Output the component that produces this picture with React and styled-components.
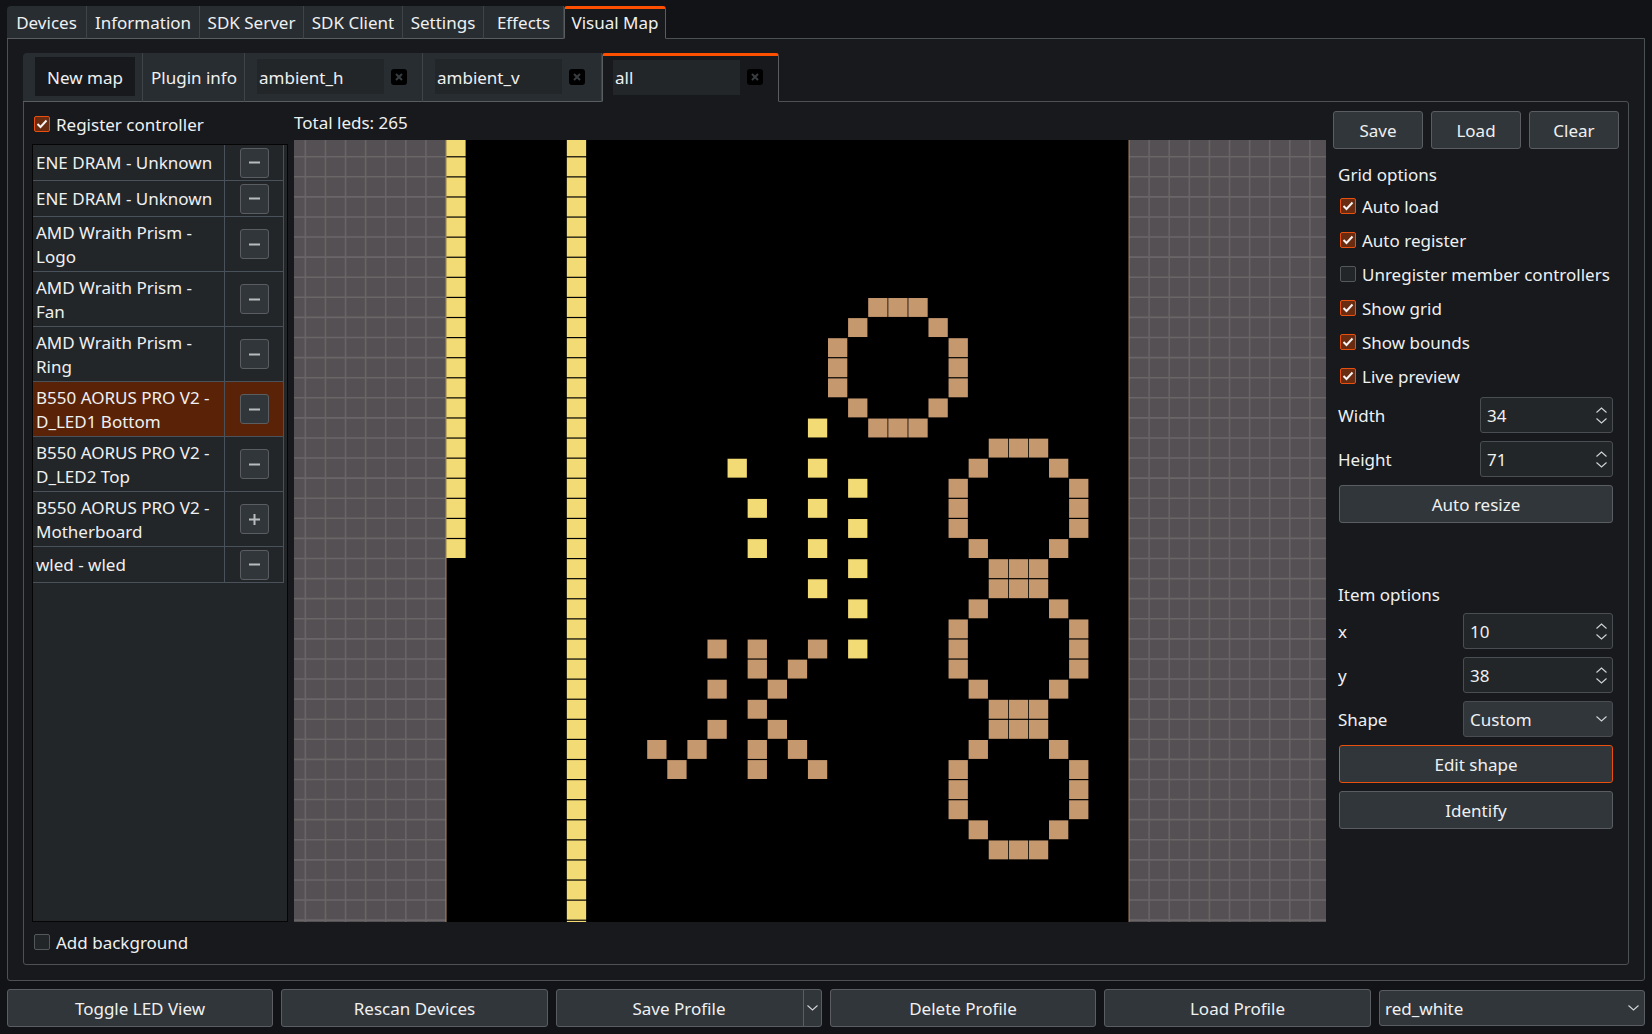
import React from 'react';
import styled, { createGlobalStyle } from 'styled-components';

const Global = createGlobalStyle`
  html, body { margin: 0; padding: 0; background: #111316; }
  * { box-sizing: border-box; }
`;

const Window = styled.div`
  width: 1652px; height: 1034px; padding: 6px 7px 8px;
  display: flex; flex-direction: column;
  background: #111316; color: #eff0f1;
  font-family: "Noto Sans", sans-serif; font-size: 17px; line-height: 24px;
  overflow: hidden;
`;
const Label = styled.span`padding-top: 2px;`;
const TopTabs = styled.div`display: flex; height: 33px; position: relative; z-index: 1;`;
const TopTab = styled.div`
  width: ${p => p.$w}px; height: 33px; flex: none;
  display: flex; align-items: center; justify-content: center;
  background: ${p => p.$active ? '#17191c' : '#282d31'};
  border-right: 1px solid ${p => p.$active ? '#5a5d60' : '#3f4448'};
  border-left: ${p => p.$active ? '1px solid #5a5d60' : 'none'};
  border-top: ${p => p.$active ? '3px solid #ff5000' : 'none'};
  border-bottom: ${p => p.$active ? '1px solid #17191c' : '1px solid #5a5d60'};
  padding: ${p => p.$active ? '0 0 2px' : '2px 0 0'};
  ${p => p.$first ? 'border-top-left-radius: 4px;' : ''}
  ${p => p.$active ? 'border-radius: 3px 3px 0 0;' : ''}
`;
const Pane = styled.div`
  height: 943px; margin-top: -1px; padding: 14px 15px 15px;
  background: #17191c; border: 1px solid #4e5154; border-radius: 0 0 3px 3px;
  display: flex; flex-direction: column;
`;
const MapTabs = styled.div`display: flex; height: 49px; position: relative; z-index: 1;`;
const MapTab = styled.div`
  height: 49px; flex: none; width: ${p => p.$w}px;
  display: flex; align-items: center;
  background: ${p => p.$active ? '#17191c' : '#282d31'};
  border-right: 1px solid ${p => p.$active ? '#5a5d60' : '#3f4448'};
  border-left: ${p => p.$active ? '1px solid #5a5d60' : 'none'};
  border-top: ${p => p.$active ? '3px solid #ff5000' : 'none'};
  border-bottom: ${p => p.$active ? '1px solid #17191c' : '1px solid #5a5d60'};
  ${p => p.$first ? 'border-top-left-radius: 4px; padding-left: 12px;' : ''}
  ${p => p.$active ? 'border-radius: 3px 3px 0 0; padding-left: 10px;' : ''}
  ${p => p.$named ? 'padding-left: 12px;' : ''}
  ${p => p.$center ? 'justify-content: center; padding-left: 1px;' : ''}
`;
const NewMap = styled.div`
  width: 100px; height: 39px; background: #17191c; margin-top: -1px;
  display: flex; align-items: center; justify-content: center;
`;
const TabName = styled.div`
  width: 127px; height: 35px; background: #232629; padding: 0 2px;
  display: flex; align-items: center; margin-top: ${p => p.$active ? '-3px' : '-1px'};
`;
const CloseBox = styled.div`
  width: 16px; height: 16px; margin-left: 7px; border-radius: 3px; background: #000;
  display: flex; align-items: center; justify-content: center;
  margin-top: ${p => p.$active ? '-3px' : '-1px'};
`;
const Panel = styled.div`
  height: 864px; margin-top: -1px; padding-left: 8px;
  border: 1px solid #4e5154; border-radius: 0 3px 3px 3px;
  display: grid; grid-template-columns: 262px 1032px 1fr;
`;
const LeftCol = styled.div`display: flex; flex-direction: column; width: 256px;`;
const CheckRow = styled.div`
  display: flex; align-items: center; gap: 6px; height: ${p => p.$h || 34}px;
  padding-left: ${p => p.$pl || 0}px;
  padding-top: ${p => p.$pt || 0}px;
  padding-bottom: ${p => p.$pb || 0}px;
`;
const Box = styled.div`
  width: 16px; height: 16px; flex: none; border-radius: 2px;
  background: ${p => p.$on ? '#692c10' : '#232629'};
  border: 1px solid ${p => p.$on ? '#e9500f' : '#55585b'};
  display: flex; align-items: center; justify-content: center;
`;
const List = styled.div`
  height: 778px; background: #232629; border: 1px solid #050505;
  padding-right: 3px; display: flex; flex-direction: column;
`;
const Row = styled.div`
  display: grid; grid-template-columns: 192px 60px; flex: none;
  height: ${p => p.$tall ? 55 : 36}px;
  background: ${p => p.$sel ? '#5a2207' : 'transparent'};
  border-bottom: 1px solid #49525b;
  border-right: 1px solid #49525b;
`;
const RowName = styled.div`
  padding: ${p => p.$tall ? 2 : 0}px 2px 0 3px; display: flex; align-items: center;
  border-right: 1px solid #49525b; line-height: 24px; white-space: pre-line;
`;
const RowAction = styled.div`display: flex; align-items: center; justify-content: center; padding-right: 1px;`;
const IconButton = styled.div`
  width: 29px; height: 30px; border-radius: 3px; background: #31363b; border: 1px solid #5a5e62;
  display: flex; align-items: center; justify-content: center;
`;
const CenterCol = styled.div`display: flex; flex-direction: column;`;
const Total = styled.div`height: 38px; display: flex; align-items: center; padding-top: 4px;`;
const CanvasWrap = styled.div`width: 1032px; height: 782px; overflow: hidden; background: #555053;`;
const RightCol = styled.div`display: flex; flex-direction: column; padding: 9px 0 0 7px; width: 295px;`;
const ButtonRow = styled.div`display: flex; gap: 8px;`;
const Button = styled.div`
  height: 38px; flex: none; width: ${p => p.$w}px; padding-top: 2px;
  border-radius: 3px; background: #31363b; border: 1px solid ${p => p.$accent ? '#e9500f' : '#5a5e62'};
  display: flex; align-items: center; justify-content: center;
`;
const Section = styled.div`
  margin-left: 6px; width: 274px;
  display: flex; flex-direction: column;
`;
const Heading = styled.div`
  height: 24px; display: flex; align-items: center; margin-left: -1px;
  margin-top: ${p => p.$mt}px; margin-bottom: ${p => p.$mb || 0}px;
`;
const FieldRow = styled.div`
  display: flex; align-items: center; justify-content: space-between;
  height: 36px; margin-top: ${p => p.$mt || 0}px; margin-bottom: 8px; margin-left: -1px; width: 275px;
`;
const Spin = styled.div`
  width: ${p => p.$w}px; height: 36px; border-radius: 3px; background: ${p => p.$select ? '#31363b' : '#232629'};
  border: 1px solid #4a4e52; padding: 0 5px 0 6px;
  display: flex; align-items: center; justify-content: space-between;
`;
const SpinArrows = styled.div`display: flex; flex-direction: column; gap: 5px;`;
const Gap = styled.div`height: 8px; flex: none;`;
const Bottom = styled.div`
  display: flex; gap: 8px; margin-top: 8px; height: 38px; align-items: center;
`;
const BottomButton = styled.div`
  height: 38px; width: ${p => p.$w}px; flex: none; padding-top: 2px;
  border-radius: 3px; background: #31363b; border: 1px solid #5a5e62;
  display: flex; align-items: center; justify-content: center;
`;
const Split = styled.div`
  display: flex; width: 266px; height: 38px; flex: none; border-radius: 3px; background: #31363b; border: 1px solid #5a5e62;
`;
const SplitMain = styled.div`flex: 1; display: flex; align-items: center; justify-content: center; padding: 2px 2px 0 0; border-right: 1px solid #5a5e62;`;
const SplitArrow = styled.div`width: 17px; display: flex; align-items: center; justify-content: center;`;
const ProfileSelect = styled.div`
  height: 36px; width: 266px; border-radius: 3px; background: #31363b; border: 1px solid #5a5e62;
  display: flex; align-items: center; justify-content: space-between; padding: 0 5px;
`;

const Check = () => (
  <svg width="12" height="10" viewBox="0 0 12 10"><path d="M1.5 5 L4.5 8 L10.5 1.5" fill="none" stroke="#f4f4f4" strokeWidth="2" /></svg>
);
const Minus = () => (
  <svg width="11" height="11" viewBox="0 0 11 11"><path d="M0 5.5 H11" stroke="#b9bcbe" strokeWidth="2" /></svg>
);
const Plus = () => (
  <svg width="11" height="11" viewBox="0 0 11 11"><path d="M0 5.5 H11 M5.5 0 V11" stroke="#b9bcbe" strokeWidth="2" /></svg>
);
const Close = () => (
  <svg width="8" height="8" viewBox="0 0 8 8"><path d="M1 1 L7 7 M7 1 L1 7" stroke="#3a3d40" strokeWidth="2" /></svg>
);
const ChevUp = () => (
  <svg width="11" height="6" viewBox="0 0 11 6"><path d="M0.5 5.5 L5.5 1 L10.5 5.5" fill="none" stroke="#d2d4d6" strokeWidth="1.1" /></svg>
);
const ChevDown = () => (
  <svg width="11" height="6" viewBox="0 0 11 6"><path d="M0.5 0.5 L5.5 5 L10.5 0.5" fill="none" stroke="#d2d4d6" strokeWidth="1.1" /></svg>
);

const CELL = 20.09;
const X0 = 152;
const Y0 = -3.4;
const range = (a, b) => Array.from({ length: b - a + 1 }, (_, i) => a + i);
const yellow = [
  ...range(0, 20).map(r => [0, r]),
  ...range(0, 39).map(r => [6, r]),
  ...[14, 16, 18, 20, 22].map(r => [18, r]),
  [14, 16], [15, 18], [15, 20],
  ...[17, 19, 21, 23, 25].map(r => [20, r]),
];
const ring = (cx, top) => [
  [cx - 1, top], [cx, top], [cx + 1, top],
  [cx - 2, top + 1], [cx + 2, top + 1],
  [cx - 3, top + 2], [cx + 3, top + 2], [cx - 3, top + 3], [cx + 3, top + 3], [cx - 3, top + 4], [cx + 3, top + 4],
  [cx - 2, top + 5], [cx + 2, top + 5],
  [cx - 1, top + 6], [cx, top + 6], [cx + 1, top + 6],
];
const tan = [
  [13, 25], [13, 27], [13, 29],
  [15, 25], [15, 26], [15, 28], [15, 30], [15, 31],
  [18, 25], [18, 31], [17, 26], [17, 30], [16, 27], [16, 29],
  [10, 30], [12, 30], [11, 31],
  ...ring(22, 8), ...ring(28, 15), ...ring(28, 22), ...ring(28, 29),
];
const vLines = range(-8, 50).map(i => X0 + i * CELL).filter(x => x < X0 || x > X0 + 34 * CELL);
const hLines = range(0, 40).map(i => Y0 + i * CELL);

const LedMap = () => (
  <svg width="1032" height="782" viewBox="0 0 1032 782" style={{ display: 'block' }}>
    <rect width="1032" height="782" fill="#555053" />
    {hLines.map((y, i) => <line key={i} x1="0" x2="1032" y1={y} y2={y} stroke="#6a6668" strokeWidth="1.6" />)}
    {vLines.map((x, i) => <line key={i} x1={x} x2={x} y1="0" y2="782" stroke="#696567" strokeWidth="1.6" />)}
    <rect x={X0} y="0" width={34 * CELL} height="782" fill="#000" />
    <line x1={X0} x2={X0} y1="0" y2="782" stroke="#b08a68" strokeWidth="1" />
    <line x1={X0 + 34 * CELL} x2={X0 + 34 * CELL} y1="0" y2="782" stroke="#b08a68" strokeWidth="1" />
    {yellow.map(([c, r], i) => (
      <rect key={i} x={X0 + c * CELL + 0.3} y={Y0 + r * CELL + 0.7} width="19.3" height="18.9" fill="#f2da74" />
    ))}
    {tan.map(([c, r], i) => (
      <rect key={i} x={X0 + c * CELL + 0.3} y={Y0 + r * CELL + 0.7} width="19.3" height="18.9" fill="#c6986e" />
    ))}
  </svg>
);

const devices = [
  { n: 'ENE DRAM - Unknown' },
  { n: 'ENE DRAM - Unknown' },
  { n: 'AMD Wraith Prism -\nLogo', tall: true },
  { n: 'AMD Wraith Prism -\nFan', tall: true },
  { n: 'AMD Wraith Prism -\nRing', tall: true },
  { n: 'B550 AORUS PRO V2 -\nD_LED1 Bottom', tall: true, sel: true },
  { n: 'B550 AORUS PRO V2 -\nD_LED2 Top', tall: true },
  { n: 'B550 AORUS PRO V2 -\nMotherboard', tall: true, plus: true },
  { n: 'wled - wled' },
];

const topTabs = [['Devices', 80], ['Information', 113], ['SDK Server', 104], ['SDK Client', 99], ['Settings', 81], ['Effects', 80]];
const gridChecks = [['Auto load', true], ['Auto register', true], ['Unregister member controllers', false], ['Show grid', true], ['Show bounds', true], ['Live preview', true]];

const Spinner = ({ w, v }) => (
  <Spin $w={w}><Label>{v}</Label><SpinArrows><ChevUp /><ChevDown /></SpinArrows></Spin>
);

export default function App() {
  return (
    <Window>
      <Global />
      <TopTabs>
        {topTabs.map(([t, w], i) => <TopTab key={t} $w={w} $first={i === 0}>{t}</TopTab>)}
        <TopTab $w={102} $active>Visual Map</TopTab>
      </TopTabs>
      <Pane>
        <MapTabs>
          <MapTab $w={120} $first><NewMap><Label>New map</Label></NewMap></MapTab>
          <MapTab $w={102} $center><Label>Plugin info</Label></MapTab>
          <MapTab $w={178} $named><TabName><Label>ambient_h</Label></TabName><CloseBox><Close /></CloseBox></MapTab>
          <MapTab $w={179} $named><TabName><Label>ambient_v</Label></TabName><CloseBox><Close /></CloseBox></MapTab>
          <MapTab $w={177} $active><TabName $active><Label>all</Label></TabName><CloseBox $active><Close /></CloseBox></MapTab>
        </MapTabs>
        <Panel>
          <LeftCol>
            <CheckRow $h={42} $pl={2} $pt={2}><Box $on><Check /></Box><Label>Register controller</Label></CheckRow>
            <List>
              {devices.map((d, i) => (
                <Row key={i} $tall={d.tall} $sel={d.sel}>
                  <RowName $tall={d.tall}>{d.n}</RowName>
                  <RowAction><IconButton>{d.plus ? <Plus /> : <Minus />}</IconButton></RowAction>
                </Row>
              ))}
            </List>
            <CheckRow $h={42} $pl={2} $pb={2}><Box /><Label>Add background</Label></CheckRow>
          </LeftCol>
          <CenterCol>
            <Total>Total leds: 265</Total>
            <CanvasWrap><LedMap /></CanvasWrap>
          </CenterCol>
          <RightCol>
            <ButtonRow>
              <Button $w={90}>Save</Button>
              <Button $w={90}>Load</Button>
              <Button $w={90}>Clear</Button>
            </ButtonRow>
            <Section>
              <Heading $mt={14} $mb={2}>Grid options</Heading>
              {gridChecks.map(([t, on]) => (
                <CheckRow key={t} $pl={1}><Box $on={on}>{on && <Check />}</Box><Label>{t}</Label></CheckRow>
              ))}
              <FieldRow $mt={4}><Label>Width</Label><Spinner w={133} v="34" /></FieldRow>
              <FieldRow><Label>Height</Label><Spinner w={133} v="71" /></FieldRow>
              <Button $w={274}>Auto resize</Button>
              <Heading $mt={60}>Item options</Heading>
              <FieldRow $mt={6}><Label>x</Label><Spinner w={150} v="10" /></FieldRow>
              <FieldRow><Label>y</Label><Spinner w={150} v="38" /></FieldRow>
              <FieldRow><Label>Shape</Label><Spin $w={150} $select><Label>Custom</Label><ChevDown /></Spin></FieldRow>
              <Button $w={274} $accent>Edit shape</Button>
              <Gap />
              <Button $w={274}>Identify</Button>
            </Section>
          </RightCol>
        </Panel>
      </Pane>
      <Bottom>
        <BottomButton $w={266}>Toggle LED View</BottomButton>
        <BottomButton $w={267}>Rescan Devices</BottomButton>
        <Split><SplitMain>Save Profile</SplitMain><SplitArrow><ChevDown /></SplitArrow></Split>
        <BottomButton $w={266}>Delete Profile</BottomButton>
        <BottomButton $w={267}>Load Profile</BottomButton>
        <ProfileSelect><Label>red_white</Label><ChevDown /></ProfileSelect>
      </Bottom>
    </Window>
  );
}
